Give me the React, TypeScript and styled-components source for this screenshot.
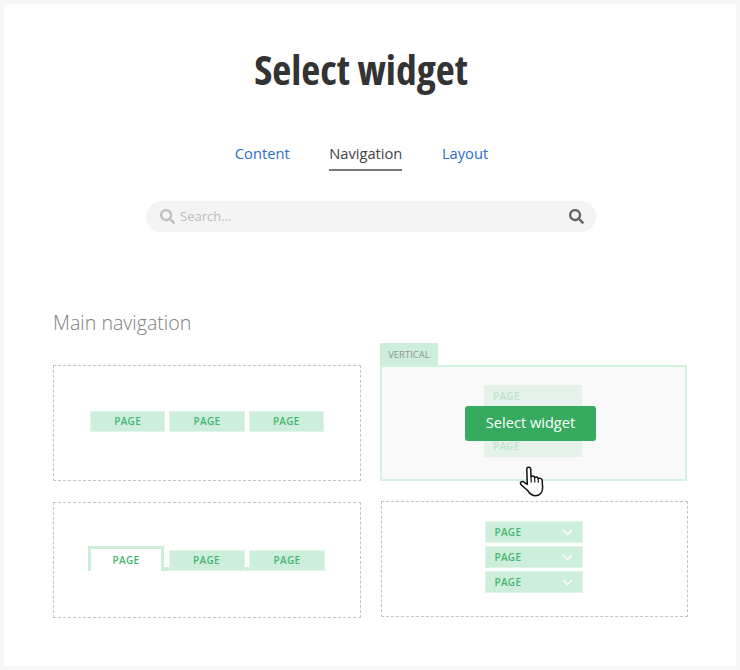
import React from "react";
import styled, { createGlobalStyle } from "styled-components";
import { FaSearch } from "react-icons/fa";

const GlobalStyle = createGlobalStyle`
    html, body {
        margin: 0;
        padding: 0;
        background: #f7f7f7;
        font-family: "Open Sans", "Liberation Sans", sans-serif;
    }
`;

const Sheet = styled.div`
    box-sizing: border-box;
    width: 732px;
    height: 662px;
    margin: 4px;
    padding: 36px 49px 0;
    background: #fff;
    overflow: hidden;
`;

const Title = styled.h1`
    margin: 0;
    height: 58px;
    padding-right: 18px;
    text-align: center;
    color: #333;
    font-size: 41.5px;
    line-height: 58px;
    font-weight: 700;
    font-stretch: 75%;
`;

const Tabs = styled.nav`
    display: flex;
    justify-content: center;
    gap: 39.5px;
    margin-top: 44px;
    padding-right: 17px;
`;

const TabLink = styled.a<{ $active?: boolean }>`
    padding-bottom: 4px;
    height: 23px;
    font-size: 14.7px;
    line-height: 23px;
    color: ${p => (p.$active ? "#444" : "#2b6cd0")};
    border-bottom: 2px solid ${p => (p.$active ? "#777" : "transparent")};
`;

const SearchBar = styled.div`
    display: flex;
    align-items: center;
    box-sizing: border-box;
    width: 450px;
    height: 31px;
    margin: 30px 0 0 93px;
    padding: 0 12px 0 14px;
    border-radius: 16px;
    background: #f4f4f4;
`;

const SearchIcon = styled(FaSearch)<{ $dark?: boolean }>`
    flex: none;
    width: 15px;
    height: 15px;
    color: ${p => (p.$dark ? "#666" : "#c0c0c0")};
`;

const SearchInput = styled.input`
    flex: 1;
    min-width: 0;
    margin: 0 0 1px 5px;
    padding: 0;
    border: 0;
    outline: 0;
    background: transparent;
    font-family: inherit;
    font-size: 13px;

    &::placeholder {
        color: #bdbdbd;
        opacity: 1;
    }
`;

const SectionTitle = styled.h2`
    margin: 76px 0 0;
    height: 30px;
    color: #808080;
    font-size: 19.6px;
    line-height: 30px;
    font-weight: 300;
`;

const Columns = styled.div`
    display: flex;
    gap: 19px;
    margin-top: 27px;
`;

const Column = styled.div<{ $gap: number; $width: number; $raise?: number }>`
    display: flex;
    flex-direction: column;
    gap: ${p => p.$gap}px;
    width: ${p => p.$width}px;
    margin-top: ${p => -(p.$raise || 0)}px;
`;

const Slot = styled.div<{ $nudge?: number }>`
    display: flex;
    align-items: center;
    justify-content: center;
    box-sizing: border-box;
    flex: none;
    width: 100%;
    height: 116px;
    margin-left: ${p => p.$nudge || 0}px;
    border: 1px dashed #c4c4c4;
`;

const Row = styled.div`
    display: flex;
    gap: 4px;
    margin-top: -3px;
`;

const PageItem = styled.div`
    box-sizing: border-box;
    width: 75.33px;
    height: 21px;
    background: #cdeeda;
    border: 1px solid #e0f5e8;
    text-align: center;
    color: #45b573;
    font-size: 10px;
    line-height: 19px;
    font-weight: 600;
    letter-spacing: 0.3px;
`;

const TabRow = styled.div`
    display: flex;
    align-items: flex-end;
    gap: 4.5px;
    margin: -4px 0 0 -1px;
    background: linear-gradient(#cdeeda, #cdeeda) bottom / 100% 4px no-repeat;
`;

const TabPage = styled(PageItem)`
    width: 76px;
`;

const ActiveTab = styled(TabPage)`
    height: 25px;
    background: #fff;
    border: 3px solid #cdeeda;
    border-bottom: 0;
    line-height: 23px;
`;

const HoverArea = styled.div`
    position: relative;
`;

const BadgeLabel = styled.div`
    display: inline-block;
    box-sizing: border-box;
    width: 58px;
    height: 22px;
    background: #cdeeda;
    text-align: center;
    color: #929292;
    font-size: 9.5px;
    line-height: 23px;
    vertical-align: top;
`;

const HoverSlot = styled.div`
    position: relative;
    display: flex;
    align-items: center;
    justify-content: center;
    box-sizing: border-box;
    width: 307px;
    height: 116px;
    border: 2px solid #d2f1df;
    background: #f9f9f9;
`;

const FadedList = styled.div`
    display: flex;
    flex-direction: column;
    justify-content: space-between;
    box-sizing: border-box;
    width: 98px;
    height: 72px;
    margin: -4px 0 0 -1px;
    padding: 0 9px;
    background: #e5f2ea;
    color: #bfe2cd;
    font-size: 10px;
    line-height: 22px;
    font-weight: 600;
    letter-spacing: 0.3px;
`;

const SelectButton = styled.button`
    position: absolute;
    left: 83px;
    top: 39px;
    width: 131px;
    height: 35px;
    padding: 0 0 3px;
    border: 0;
    border-radius: 3px;
    background: #36ab60;
    color: #fff;
    font-family: inherit;
    font-size: 14.6px;
`;

const HandCursor = styled.svg`
    position: absolute;
    left: 137px;
    top: 99px;
    width: 26px;
    height: 31px;
`;

const Stack = styled.div`
    display: flex;
    flex-direction: column;
    gap: 3px;
    margin: -4px 0 0 -2px;
`;

const DropItem = styled.div`
    display: flex;
    align-items: center;
    justify-content: space-between;
    box-sizing: border-box;
    width: 98px;
    height: 22px;
    padding: 0 9px;
    background: #cdeeda;
    border: 1px solid #e0f5e8;
    color: #45b573;
    font-size: 10px;
    font-weight: 600;
    letter-spacing: 0.3px;
`;

const Chevron = styled.svg`
    width: 11px;
    height: 7px;
`;

const DropPage = () => (
    <DropItem>
        PAGE
        <Chevron viewBox="0 0 11 7">
            <path d="M1 1l4.5 4.5L10 1" fill="none" stroke="#fff" strokeWidth="1.5" />
        </Chevron>
    </DropItem>
);

export default function App() {
    return (
        <Sheet>
            <GlobalStyle />
            <Title>Select widget</Title>
            <Tabs>
                <TabLink>Content</TabLink>
                <TabLink $active>Navigation</TabLink>
                <TabLink>Layout</TabLink>
            </Tabs>
            <SearchBar>
                <SearchIcon />
                <SearchInput placeholder="Search..." />
                <SearchIcon $dark />
            </SearchBar>
            <SectionTitle>Main navigation</SectionTitle>
            <Columns>
                <Column $gap={21} $width={308}>
                    <Slot>
                        <Row>
                            <PageItem>PAGE</PageItem>
                            <PageItem>PAGE</PageItem>
                            <PageItem>PAGE</PageItem>
                        </Row>
                    </Slot>
                    <Slot>
                        <TabRow>
                            <ActiveTab>PAGE</ActiveTab>
                            <TabPage>PAGE</TabPage>
                            <TabPage>PAGE</TabPage>
                        </TabRow>
                    </Slot>
                </Column>
                <Column $gap={20} $width={307} $raise={22}>
                    <HoverArea>
                        <BadgeLabel>VERTICAL</BadgeLabel>
                        <HoverSlot>
                            <FadedList>
                                <span>PAGE</span>
                                <span>PAGE</span>
                            </FadedList>
                            <SelectButton>Select widget</SelectButton>
                            <HandCursor viewBox="0 0 26 31">
                                <path
                                    d="M9 25 C7 22.5 4 21 2 18.5 C.6 16.8 2.6 14.6 4.6 15.8 L8.3 18.3 L7.8 3 C7.8 .6 11.6 .6 11.7 3 L12 10.8 C13 9.4 15.4 9.6 15.6 11.6 C16.6 10.4 19 10.8 19.2 12.8 C20.2 11.8 23 12.2 23.2 14.4 L23.6 21.5 C23.8 26.5 20.5 29.8 16.5 29.8 C13 29.8 11 28 9 25 Z"
                                    fill="#fff"
                                    stroke="#111"
                                    strokeWidth="1.5"
                                    strokeLinejoin="round"
                                />
                                <path d="M12 10.8 L12.3 16.5 M15.6 11.6 L15.8 16.5 M19.2 12.8 L19.3 16.8" fill="none" stroke="#111" strokeWidth="1.2" />
                            </HandCursor>
                        </HoverSlot>
                    </HoverArea>
                    <Slot $nudge={1}>
                        <Stack>
                            <DropPage />
                            <DropPage />
                            <DropPage />
                        </Stack>
                    </Slot>
                </Column>
            </Columns>
        </Sheet>
    );
}
